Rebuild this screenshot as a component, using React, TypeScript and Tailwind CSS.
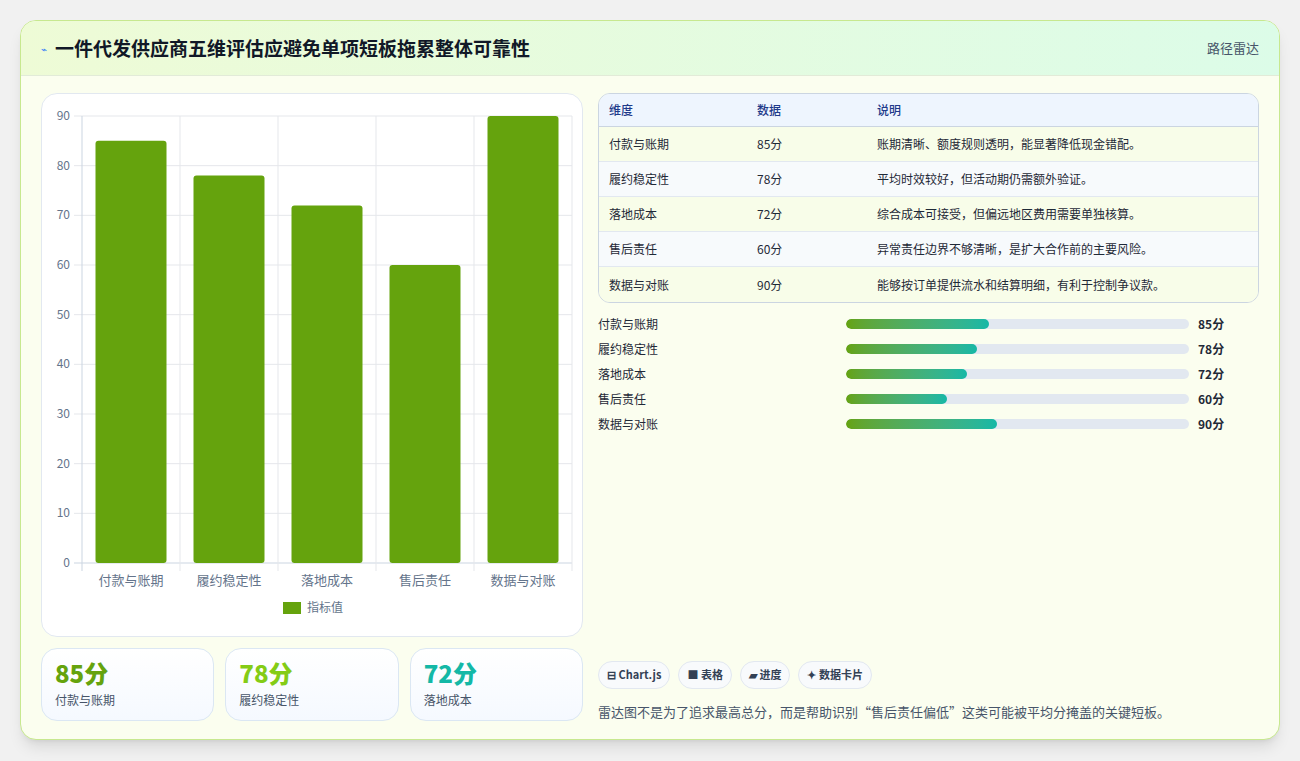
import React from "react";

const data = [
  { n: "付款与账期", v: 85, d: "账期清晰、额度规则透明，能显著降低现金错配。" },
  { n: "履约稳定性", v: 78, d: "平均时效较好，但活动期仍需额外验证。" },
  { n: "落地成本", v: 72, d: "综合成本可接受，但偏远地区费用需要单独核算。" },
  { n: "售后责任", v: 60, d: "异常责任边界不够清晰，是扩大合作前的主要风险。" },
  { n: "数据与对账", v: 90, d: "能够按订单提供流水和结算明细，有利于控制争议款。" },
];

function Chart() {
  const x0 = 40, x1 = 530, y0 = 469, y1 = 22;
  const cw = (x1 - x0) / 5;
  const ys = (v: number) => y0 - ((y0 - y1) * v) / 90;
  return (
    <svg width="542" height="543" className="block">
      {[0, 10, 20, 30, 40, 50, 60, 70, 80, 90].map((t) => (
        <g key={t}>
          <line x1={x0 - 8} x2={x1} y1={ys(t)} y2={ys(t)} stroke={t === 0 ? "#cbd5e1" : "#e5e7eb"} />
          <text x={x0 - 12} y={ys(t) + 4} textAnchor="end" fontSize="12" fill="#64748b">{t}</text>
        </g>
      ))}
      {[0, 1, 2, 3, 4, 5].map((i) => (
        <line key={i} x1={x0 + i * cw} x2={x0 + i * cw} y1={y1} y2={y0 + 8} stroke={i === 0 ? "#cbd5e1" : "#e5e7eb"} />
      ))}
      {data.map((d, i) => (
        <g key={d.n}>
          <rect x={x0 + i * cw + 13.5} y={ys(d.v)} width="71" height={y0 - ys(d.v)} rx="3" fill="#65a30d" />
          <text x={x0 + i * cw + cw / 2} y={491} textAnchor="middle" fontSize="13" fill="#64748b">{d.n}</text>
        </g>
      ))}
      <rect x="241" y="508" width="18" height="12" fill="#65a30d" />
      <text x="265" y="518" fontSize="12" fill="#64748b">指标值</text>
    </svg>
  );
}

export default function App() {
  return (
    <div className="w-[1300px] h-[761px] bg-[#f1f1f1] pt-5 px-5" style={{ fontFamily: '"Noto Sans CJK SC", "Noto Sans", sans-serif' }}>
      <div className="w-[1260px] h-[720px] rounded-2xl border border-[#c7e88f] bg-[#fbfeef] overflow-hidden shadow-lg flex flex-col">
        <div className="h-[55px] shrink-0 flex items-center justify-between px-5 bg-gradient-to-r from-[#eefbd6] to-[#dcfce8] border-b border-[#e2ebd8]">
          <div className="flex items-center gap-2">
            <span className="text-[#3b82f6] text-[10px]">⌁</span>
            <span className="text-[19px] font-bold text-[#111827]">一件代发供应商五维评估应避免单项短板拖累整体可靠性</span>
          </div>
          <span className="text-[13px] text-[#475569]">路径雷达</span>
        </div>
        <div className="flex-1 flex gap-[15px] px-5 pt-[17px] pb-[18px]">
          <div className="w-[542px] flex flex-col gap-[11px]">
            <div className="h-[544px] rounded-2xl border border-[#e2e8f0] bg-white overflow-hidden">
              <Chart />
            </div>
            <div className="flex gap-[11px]">
              {[["85分", "text-[#65a30d]", "付款与账期"], ["78分", "text-[#84cc16]", "履约稳定性"], ["72分", "text-[#14b8a6]", "落地成本"]].map(([v, c, l]) => (
                <div key={l} className="flex-1 h-[73px] rounded-2xl border border-[#dbe7f3] bg-gradient-to-b from-white to-[#f5f9ff] px-[13px] pt-[9px]">
                  <div className={`text-[24px] font-extrabold leading-[30px] ${c}`}>{v}</div>
                  <div className="text-[12px] text-[#475569] mt-[3px]">{l}</div>
                </div>
              ))}
            </div>
          </div>
          <div className="flex-1 flex flex-col">
            <div className="rounded-xl border border-[#cbd5e1] overflow-hidden text-[12px]">
              <div className="flex h-[33px] items-center bg-[#eef5fe] border-b border-[#cbd5e1] text-[#1e3a8a] font-medium">
                <div className="w-[158px] pl-[10px]">维度</div>
                <div className="w-[120px]">数据</div>
                <div>说明</div>
              </div>
              {data.map((d, i) => (
                <div key={d.n} className={`flex h-[35px] items-center text-[#1f2937] ${i % 2 === 0 ? "bg-[#f8fde9]" : "bg-[#f7fafc]"} ${i < 4 ? "border-b border-[#e2e8f0]" : ""}`}>
                  <div className="w-[158px] pl-[10px]">{d.n}</div>
                  <div className="w-[120px]">{d.v}分</div>
                  <div>{d.d}</div>
                </div>
              ))}
            </div>
            <div className="mt-[12px] flex flex-col gap-[7px]">
              {data.map((d) => (
                <div key={d.n} className="flex items-center h-[18px] text-[12px] text-[#1f2937]">
                  <div className="w-[248px]">{d.n}</div>
                  <div className="w-[343px] h-[10px] rounded-full bg-[#e2e8f0] overflow-hidden">
                    <div className="h-full rounded-full bg-gradient-to-r from-[#65a30d] to-[#14b8a6]" style={{ width: `${d.v * 1.68}px` }} />
                  </div>
                  <div className="ml-[9px] font-bold">{d.v}分</div>
                </div>
              ))}
            </div>
            <div className="mt-auto flex gap-[8px]">
              {["⊟ Chart.js", "■ 表格", "▰ 进度", "✦ 数据卡片"].map((c) => (
                <div key={c} className="h-[28px] px-[8px] rounded-full border border-[#e2e8f0] bg-[#f8fafc] flex items-center text-[11px] font-semibold text-[#334155]">{c}</div>
              ))}
            </div>
            <div className="mt-[13px] text-[13px] text-[#475569]">雷达图不是为了追求最高总分，而是帮助识别“售后责任偏低”这类可能被平均分掩盖的关键短板。</div>
          </div>
        </div>
      </div>
    </div>
  );
}
